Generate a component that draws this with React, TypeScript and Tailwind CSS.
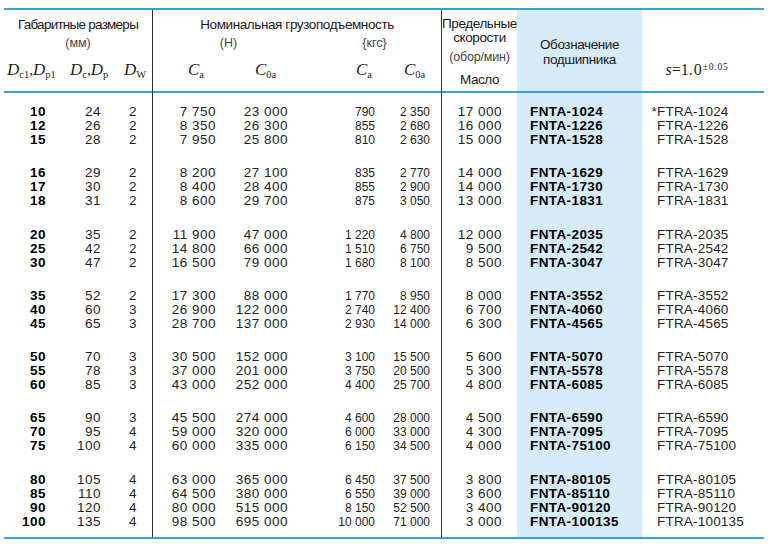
import React from "react"

type Row = [string, string, string, string, string, string, string, string, string, string?]

// d, Dc, Dw, Ca(N), C0a(N), Ca(kgf), C0a(kgf), speed, suffix, mark
const groups: Row[][] = [
  [
    ["10", "24", "2", "7 750", "23 000", "790", "2 350", "17 000", "1024", "*"],
    ["12", "26", "2", "8 350", "26 300", "855", "2 680", "16 000", "1226"],
    ["15", "28", "2", "7 950", "25 800", "810", "2 630", "15 000", "1528"],
  ],
  [
    ["16", "29", "2", "8 200", "27 100", "835", "2 770", "14 000", "1629"],
    ["17", "30", "2", "8 400", "28 400", "855", "2 900", "14 000", "1730"],
    ["18", "31", "2", "8 600", "29 700", "875", "3 050", "13 000", "1831"],
  ],
  [
    ["20", "35", "2", "11 900", "47 000", "1 220", "4 800", "12 000", "2035"],
    ["25", "42", "2", "14 800", "66 000", "1 510", "6 750", "9 500", "2542"],
    ["30", "47", "2", "16 500", "79 000", "1 680", "8 100", "8 500", "3047"],
  ],
  [
    ["35", "52", "2", "17 300", "88 000", "1 770", "8 950", "8 000", "3552"],
    ["40", "60", "3", "26 900", "122 000", "2 740", "12 400", "6 700", "4060"],
    ["45", "65", "3", "28 700", "137 000", "2 930", "14 000", "6 300", "4565"],
  ],
  [
    ["50", "70", "3", "30 500", "152 000", "3 100", "15 500", "5 600", "5070"],
    ["55", "78", "3", "37 000", "201 000", "3 750", "20 500", "5 300", "5578"],
    ["60", "85", "3", "43 000", "252 000", "4 400", "25 700", "4 800", "6085"],
  ],
  [
    ["65", "90", "3", "45 500", "274 000", "4 600", "28 000", "4 500", "6590"],
    ["70", "95", "4", "59 000", "320 000", "6 000", "33 000", "4 300", "7095"],
    ["75", "100", "4", "60 000", "335 000", "6 150", "34 500", "4 000", "75100"],
  ],
  [
    ["80", "105", "4", "63 000", "365 000", "6 450", "37 500", "3 800", "80105"],
    ["85", "110", "4", "64 500", "380 000", "6 550", "39 000", "3 600", "85110"],
    ["90", "120", "4", "80 000", "515 000", "8 150", "52 500", "3 400", "90120"],
    ["100", "135", "4", "98 500", "695 000", "10 000", "71 000", "3 000", "100135"],
  ],
]

// one column of values, grouped with the same spacing everywhere
function Column({
  className,
  render,
}: {
  className: string
  render: (r: Row) => React.ReactNode
}) {
  return (
    <div className={className}>
      {groups.map((g, gi) => (
        <div key={gi} className={gi > 0 ? "mt-[19.3px]" : ""}>
          {g.map((r, ri) => (
            <div key={ri} className="h-[14px] leading-[14px] whitespace-nowrap">
              {render(r)}
            </div>
          ))}
        </div>
      ))}
    </div>
  )
}

function Sym({ base, sub }: { base: string; sub: string }) {
  return (
    <span className="font-['Liberation_Serif',serif] italic text-[17px]">
      {base}
      <sub className="not-italic text-[10.5px]">{sub}</sub>
    </span>
  )
}

const head = "h-[83px] border-b-2 border-[#2fa4dd]"
const body = "flex pt-[12px] pb-[8px]"
const cond = "text-[13.5px] tracking-[-0.4px] leading-[14px] text-[#1a1a1a]"
const num = "text-[13.5px] tracking-[0.5px]"

export default function App() {
  return (
    <div className="w-[768px] h-[548px] bg-white pt-[8px] px-[4px] text-[#231f20] font-['Liberation_Sans',Arial,sans-serif]">
      <div className="flex w-[760px] border-t-2 border-b-2 border-[#2fa4dd]">
        {/* dimensions */}
        <div className="w-[149px] border-r border-[#333]">
          <div className={head}>
            <div className={`pt-[8px] text-center ${cond} tracking-[-0.75px]`}>Габаритные размеры</div>
            <div className="mt-[4px] text-center text-[12.5px] leading-[14px] text-[#444]">(мм)</div>
            <div className="mt-[10px] flex h-[20px] items-center leading-[20px]">
              <div className="w-[63px] pl-[3px] whitespace-nowrap">
                <Sym base="D" sub="c1" />
                <span className="font-['Liberation_Serif',serif] text-[15px]">,</span>
                <Sym base="D" sub="p1" />
              </div>
              <div className="w-[54px] pl-[3px] whitespace-nowrap">
                <Sym base="D" sub="c" />
                <span className="font-['Liberation_Serif',serif] text-[15px]">,</span>
                <Sym base="D" sub="p" />
              </div>
              <div className="pl-[3px] whitespace-nowrap">
                <Sym base="D" sub="W" />
              </div>
            </div>
          </div>
          <div className={`${body} ${num}`}>
            <Column className="w-[50px] pr-[8px] text-right font-bold text-black" render={(r) => r[0]} />
            <Column className="w-[53px] pr-[6px] text-right" render={(r) => r[1]} />
            <Column className="w-[45px] pr-[15px] text-right" render={(r) => r[2]} />
          </div>
        </div>

        {/* load ratings */}
        <div className="w-[289px] border-r border-[#333]">
          <div className={head}>
            <div className={`pt-[8px] text-center ${cond}`}>Номинальная грузоподъемность</div>
            <div className="mt-[4px] flex text-[12.5px] leading-[14px] text-[#444]">
              <div className="w-[147px] pl-[4px] text-center">(Н)</div>
              <div className="w-[141px] pl-[8px] text-center">{"{кгс}"}</div>
            </div>
            <div className="mt-[10px] flex h-[20px] items-center leading-[20px]">
              <div className="w-[75px] pl-[35px]">
                <Sym base="C" sub="a" />
              </div>
              <div className="w-[72px] pl-[27px]">
                <Sym base="C" sub="0a" />
              </div>
              <div className="w-[85px] pl-[56px]">
                <Sym base="C" sub="a" />
              </div>
              <div className="pl-[19px]">
                <Sym base="C" sub="0a" />
              </div>
            </div>
          </div>
          <div className={body}>
            <Column className={`w-[75px] pr-[12px] text-right ${num}`} render={(r) => r[3]} />
            <Column className={`w-[72px] pr-[12px] text-right ${num}`} render={(r) => r[4]} />
            <Column className="w-[85px] pr-[10px] text-right text-[12px]" render={(r) => r[5]} />
            <Column className="w-[56px] pr-[11px] text-right text-[12px]" render={(r) => r[6]} />
          </div>
        </div>

        {/* limiting speed */}
        <div className="w-[75px]">
          <div className={`${head} text-center`}>
            <div className={`pt-[7px] ${cond} leading-[14.5px]`}>
              Предельные
              <br />
              скорости
            </div>
            <div className="mt-[5px] text-[12.5px] leading-[14px] text-[#444] tracking-[-0.2px]">(обор/мин)</div>
            <div className={`mt-[9px] ${cond} text-[12.5px]`}>Масло</div>
          </div>
          <div className={body}>
            <Column className={`w-[75px] pr-[15px] text-right ${num}`} render={(r) => r[7]} />
          </div>
        </div>

        {/* bearing designation */}
        <div className="w-[125px] bg-[#d7ecfa]">
          <div className={`${head} pt-[27px] text-center ${cond} leading-[15px]`}>
            Обозначение
            <br />
            подшипника
          </div>
          <div className={body}>
            <Column
              className="pl-[13px] text-[13.5px] tracking-[0.4px] font-bold text-black"
              render={(r) => `FNTA-${r[8]}`}
            />
          </div>
        </div>

        {/* thrust washer */}
        <div className="w-[122px]">
          <div className={`${head} flex items-end justify-center pb-[11px] pr-[12px]`}>
            <span className="font-['Liberation_Serif',serif] text-[16px] leading-[20px] whitespace-nowrap">
              <span className="italic">s</span>=1<span className="tracking-[1px]">.</span>0
              <sup className="text-[9.5px] tracking-[0.8px] ml-[1px]">±0.05</sup>
            </span>
          </div>
          <div className={body}>
            <Column
              className="pl-[3px] text-[13.5px] tracking-[0.2px]"
              render={(r) => (
                <>
                  <span className="inline-block w-[12px] text-right">{r[9] ?? ""}</span>
                  FTRA-{r[8]}
                </>
              )}
            />
          </div>
        </div>
      </div>
    </div>
  )
}
